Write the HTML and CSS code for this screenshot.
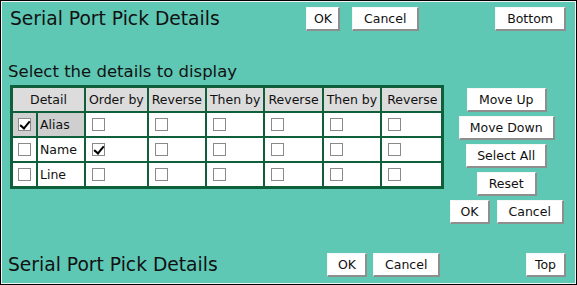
FILE: index.html
```html
<!DOCTYPE html>
<html>
<head>
<meta charset="utf-8">
<title>Serial Port Pick Details</title>
<link rel="stylesheet" href="styles.css">
</head>
<body>
<div class="frame">
  <div class="bar bar-top">
    <h1 class="title">Serial Port Pick Details</h1>
    <div class="pair">
      <button class="btn btn-ok-sm">OK</button>
      <button class="btn">Cancel</button>
    </div>
    <button class="btn end">Bottom</button>
  </div>

  <h2 class="subtitle">Select the details to display</h2>

  <div class="main">
    <table class="grid">
      <thead>
        <tr>
          <th colspan="2">Detail</th>
          <th>Order by</th>
          <th>Reverse</th>
          <th>Then by</th>
          <th>Reverse</th>
          <th>Then by</th>
          <th class="last">Reverse</th>
        </tr>
      </thead>
      <tbody>
        <tr>
          <td class="cb sel"><input type="checkbox" class="chk" checked></td>
          <td class="name sel">Alias</td>
          <td><input type="checkbox" class="chk"></td>
          <td><input type="checkbox" class="chk"></td>
          <td><input type="checkbox" class="chk"></td>
          <td><input type="checkbox" class="chk"></td>
          <td><input type="checkbox" class="chk"></td>
          <td><input type="checkbox" class="chk"></td>
        </tr>
        <tr>
          <td class="cb"><input type="checkbox" class="chk"></td>
          <td class="name">Name</td>
          <td><input type="checkbox" class="chk" checked></td>
          <td><input type="checkbox" class="chk"></td>
          <td><input type="checkbox" class="chk"></td>
          <td><input type="checkbox" class="chk"></td>
          <td><input type="checkbox" class="chk"></td>
          <td><input type="checkbox" class="chk"></td>
        </tr>
        <tr>
          <td class="cb"><input type="checkbox" class="chk"></td>
          <td class="name">Line</td>
          <td><input type="checkbox" class="chk"></td>
          <td><input type="checkbox" class="chk"></td>
          <td><input type="checkbox" class="chk"></td>
          <td><input type="checkbox" class="chk"></td>
          <td><input type="checkbox" class="chk"></td>
          <td><input type="checkbox" class="chk"></td>
        </tr>
      </tbody>
    </table>

    <div class="side">
      <button class="btn">Move Up</button>
      <button class="btn btn-tight">Move Down</button>
      <button class="btn btn-tight">Select All</button>
      <button class="btn">Reset</button>
      <div class="pair">
        <button class="btn btn-ok">OK</button>
        <button class="btn">Cancel</button>
      </div>
    </div>
  </div>

  <div class="bar bar-bottom">
    <h1 class="title">Serial Port Pick Details</h1>
    <div class="pair">
      <button class="btn btn-ok">OK</button>
      <button class="btn">Cancel</button>
    </div>
    <button class="btn end btn-top">Top</button>
  </div>
</div>
</body>
</html>
```

FILE: styles.css
```css
html, body {
  margin: 0;
  padding: 0;
}

body {
  font-family: "DejaVu Sans", Verdana, sans-serif;
  color: #111;
  background: #ffffff;
}

.frame {
  box-sizing: border-box;
  width: 577px;
  height: 285px;
  border: 1px solid #000;
  box-shadow: inset 0 0 0 1px #f2f2f2;
  background: #5ec8b5;
  display: flex;
  flex-direction: column;
  padding: 1px;
}

.bar {
  display: flex;
  align-items: center;
}

.bar-top {
  padding: 5px 9px 0 8px;
}

.bar-top .title {
  flex: 0 0 296px;
}

.bar-bottom {
  margin-top: auto;
  padding: 0 9px 6px 6px;
}

.bar-bottom .title {
  flex: 0 0 319px;
}

.title {
  margin: 0;
  font-size: 18.7px;
  font-weight: normal;
  line-height: 24px;
  white-space: nowrap;
}

.pair {
  display: flex;
  gap: 7px;
}

.bar-top .pair {
  gap: 12px;
}

.bar-bottom .pair {
  gap: 6px;
}

.btn {
  box-sizing: border-box;
  height: 24px;
  padding: 0 11px;
  margin: 0;
  font-family: "DejaVu Sans", Verdana, sans-serif;
  font-size: 12.5px;
  color: #111;
  background: #ffffff;
  border-style: solid;
  border-width: 1px 2px 2px 1px;
  border-color: #f6f6f6 #8e8e8e #8e8e8e #f6f6f6;
  border-radius: 0;
  line-height: 20px;
}

.bar .end {
  margin-left: auto;
}

.btn.btn-ok-sm {
  padding: 0 6px 0 7px;
}

.btn.btn-ok {
  padding: 0 9px 0 10px;
}

.btn.btn-tight {
  padding: 0 10px;
}

.btn.btn-top {
  padding: 0 8px;
}

.subtitle {
  margin: 31px 0 0 6px;
  font-size: 16.5px;
  font-weight: normal;
  line-height: 20px;
  white-space: nowrap;
}

.main {
  display: flex;
  align-items: flex-start;
  margin: 3px 0 0 8px;
}

.grid {
  border-collapse: separate;
  border-spacing: 0;
  border: 2px solid #0f5f3a;
  background: #ffffff;
  font-size: 12.5px;
}

.grid th,
.grid td {
  border: 1px solid #0f5f3a;
  height: 25px;
  box-sizing: border-box;
  white-space: nowrap;
}

.grid th {
  background: #dcdcdc;
  font-weight: normal;
  text-align: center;
  padding: 0 3px;
}

.grid th.last {
  padding: 0 4px 0 5px;
}

.grid td {
  padding: 0 2px 0 6px;
  vertical-align: middle;
}

.grid td.cb {
  padding: 0 5px;
}

.grid td.name {
  padding: 0 7px 0 2px;
}

.grid td.sel {
  background: #cfcfcf;
}

.chk {
  -webkit-appearance: none;
  appearance: none;
  box-sizing: border-box;
  width: 13px;
  height: 13px;
  margin: 0;
  display: block;
  border: 1px solid #8a8a8a;
  background: #ffffff;
  position: relative;
}

.chk:checked::after {
  content: "";
  position: absolute;
  left: 3px;
  top: 0px;
  width: 4px;
  height: 8px;
  border-right: 2px solid #000;
  border-bottom: 2px solid #000;
  transform: rotate(40deg);
}

.side {
  flex: 1;
  display: flex;
  flex-direction: column;
  align-items: center;
  gap: 4px;
  margin-top: 3px;
  padding-right: 6px;
}
```
